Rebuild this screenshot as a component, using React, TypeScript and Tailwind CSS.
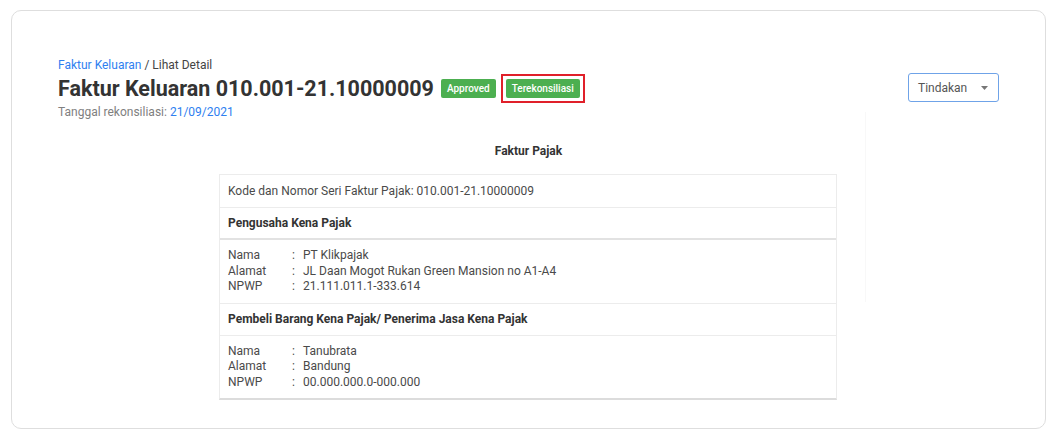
type Field = { label: string; value: string }

const seller: Field[] = [
  { label: 'Nama', value: 'PT Klikpajak' },
  { label: 'Alamat', value: 'JL Daan Mogot Rukan Green Mansion no A1-A4' },
  { label: 'NPWP', value: '21.111.011.1-333.614' }
]

const buyer: Field[] = [
  { label: 'Nama', value: 'Tanubrata' },
  { label: 'Alamat', value: 'Bandung' },
  { label: 'NPWP', value: '00.000.000.0-000.000' }
]

function FieldList({ fields }: { fields: Field[] }) {
  return (
    <div className="px-2 pt-[8px] pb-[8px] text-[12px] leading-[15.5px] text-[#4a4a4a]">
      {fields.map(f => (
        <div key={f.label} className="flex">
          <span className="w-[64px]">{f.label}</span>
          <span className="w-[11px]">:</span>
          <span>{f.value}</span>
        </div>
      ))}
    </div>
  )
}

export default function App() {
  return (
    <div className="h-[436px] w-[1062px] bg-white p-[10px] pl-[11px] font-['Roboto',sans-serif]">
      <div className="relative h-[419px] w-[1035px] rounded-[10px] border border-[#dedede] bg-white">
        {/* faint leftover menu shadow */}
        <div className="absolute left-[853px] top-[101px] h-[190px] w-[141px] border-l border-[#f8f8f8]" />

        <div className="flex items-start justify-between pl-[46px] pr-[46px] pt-[47px]">
          <div>
            <p className="text-[12px] leading-[14px] text-[#444]">
              <span className="text-[#2f7ff0]">Faktur Keluaran</span> / Lihat Detail
            </p>
            <div className="mt-[2px] flex items-center">
              <h1 className="text-[21.5px] font-bold leading-[28px] text-[#333]">
                Faktur Keluaran 010.001-21.10000009
              </h1>
              <span className="ml-[7px] rounded-[2px] bg-[#4caf50] px-[6px] py-[3px] text-[10px] font-medium leading-[13px] text-white">
                Approved
              </span>
              <span className="ml-[5px] border-2 border-[#e0202a] px-[3px] py-[3px]">
                <span className="block rounded-[2px] bg-[#4caf50] px-[6px] py-[3px] text-[10px] font-medium leading-[13px] text-white">
                  Terekonsiliasi
                </span>
              </span>
            </div>
            <p className="mt-[1px] text-[12px] leading-[16px] text-[#808080]">
              Tanggal rekonsiliasi: <span className="text-[#2f7ff0]">21/09/2021</span>
            </p>
          </div>

          <button className="mt-[15px] flex h-[29px] w-[91px] items-center justify-between rounded-[3px] border border-[#6fa3e8] bg-white pl-[9px] pr-[10px] text-[12px] text-[#555]">
            Tindakan
            <svg width="7" height="4" viewBox="0 0 7 4">
              <path d="M0 0h7L3.5 4z" fill="#777" />
            </svg>
          </button>
        </div>

        <p className="mt-[24px] text-center text-[12px] font-bold leading-[14px] text-[#333]">
          Faktur Pajak
        </p>

        <div className="ml-[207px] mt-[16px] w-[618px] border-x border-t border-[#ececec] border-b-2 border-b-[#dcdcdc] text-[12px] text-[#4a4a4a]">
          <div className="flex h-[33px] items-center border-b border-[#ececec] px-2">
            Kode dan Nomor Seri Faktur Pajak: 010.001-21.10000009
          </div>
          <div className="flex h-[32px] items-center border-b-2 border-[#e2e2e2] px-2 font-bold text-[#333]">
            Pengusaha Kena Pajak
          </div>
          <div className="border-b border-[#ececec]">
            <FieldList fields={seller} />
          </div>
          <div className="flex h-[32px] items-center border-b border-[#ececec] px-2 font-bold text-[#333]">
            Pembeli Barang Kena Pajak/ Penerima Jasa Kena Pajak
          </div>
          <FieldList fields={buyer} />
        </div>
      </div>
    </div>
  )
}
